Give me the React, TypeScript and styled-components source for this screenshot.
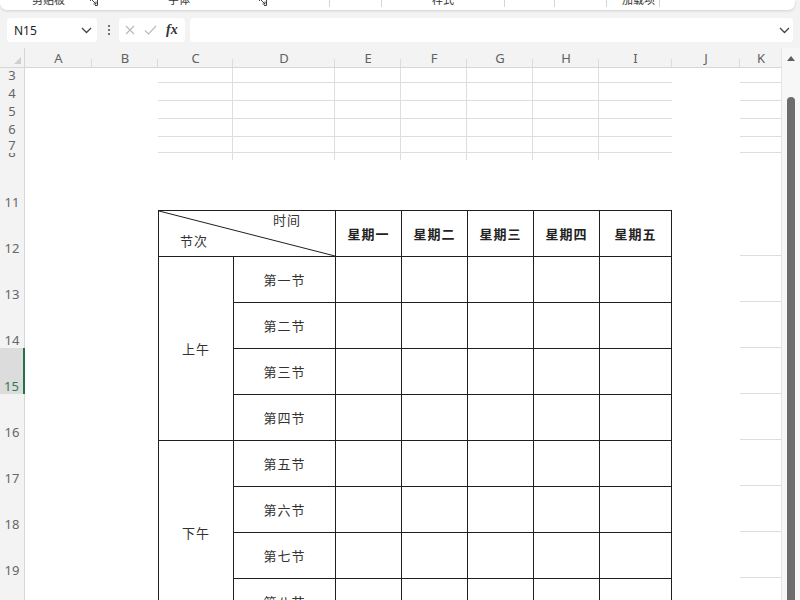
import React from 'react';
import styled, { createGlobalStyle } from 'styled-components';

const GlobalStyle = createGlobalStyle`
  html, body { margin: 0; padding: 0; }
  body {
    font-family: "Noto Sans", "Noto Sans CJK SC", sans-serif;
    background: #f3f3f3;
  }
`;

const COLS = ['A', 'B', 'C', 'D', 'E', 'F', 'G', 'H', 'I', 'J', 'K'];

type RowKind = 'grid' | 'stub' | 'blank' | 'table';

const ROWS: { n: string; kind: RowKind }[] = [
  { n: '3', kind: 'grid' },
  { n: '4', kind: 'grid' },
  { n: '5', kind: 'grid' },
  { n: '6', kind: 'grid' },
  { n: '7', kind: 'grid' },
  { n: '8', kind: 'stub' },
  { n: '11', kind: 'blank' },
  ...['12', '13', '14', '15', '16', '17', '18', '19', '20'].map((n) => ({ n, kind: 'table' as RowKind })),
];

const WEEKDAYS = ['星期一', '星期二', '星期三', '星期四', '星期五'];

const PERIODS = [
  { label: '上午', lessons: ['第一节', '第二节', '第三节', '第四节'] },
  { label: '下午', lessons: ['第五节', '第六节', '第七节', '第八节'] },
];

// which light gridlines a plain cell shows
function cellLines(kind: RowKind, col: number) {
  if (kind === 'grid') {
    if (col >= 2 && col <= 7) return { r: true, b: true };
    if (col === 8 || col === 10) return { r: false, b: true };
  }
  if (kind === 'stub' && col >= 2 && col <= 7) return { r: true, b: false };
  if (kind === 'table' && col === 10) return { r: false, b: true };
  return { r: false, b: false };
}

export default function App() {
  return (
    <Window>
      <GlobalStyle />
      {/*------------ Ribbon (clipped) -----------*/}
      <Ribbon>
        <RibbonGroup $w={104} $pl={32} $pr={6}>
          <RibbonLabel>剪贴板</RibbonLabel>
          <Launcher />
        </RibbonGroup>
        <RibbonGroup $w={171} $pl={64} $pr={8}>
          <RibbonLabel>字体</RibbonLabel>
          <Launcher />
        </RibbonGroup>
        <RibbonGroup $w={55} $divider />
        <RibbonGroup $w={52} $divider />
        <RibbonGroup $w={123} $pl={50} $divider>
          <RibbonLabel>样式</RibbonLabel>
        </RibbonGroup>
        <RibbonGroup $w={50} $divider />
        <RibbonGroup $w={52} $divider />
        <RibbonGroup $w={53} $pl={15} $divider>
          <RibbonLabel>加载项</RibbonLabel>
        </RibbonGroup>
      </Ribbon>

      {/*------------ Formula bar -----------*/}
      <FormulaRow>
        <NameBox>
          <span>N15</span>
          <Chevron />
        </NameBox>
        <Dots>
          <svg width="4" height="12" viewBox="0 0 4 12">
            <circle cx="2" cy="2" r="1.1" fill="#555" />
            <circle cx="2" cy="6" r="1.1" fill="#555" />
            <circle cx="2" cy="10" r="1.1" fill="#555" />
          </svg>
        </Dots>
        <EditBox>
          <svg width="10" height="10" viewBox="0 0 10 10">
            <path d="M1 1 L9 9 M9 1 L1 9" stroke="#b8b8b8" strokeWidth="1.1" fill="none" />
          </svg>
          <svg width="13" height="10" viewBox="0 0 13 10">
            <path d="M1 5.5 L4.5 9 L12 1" stroke="#b8b8b8" strokeWidth="1.1" fill="none" />
          </svg>
          <Fx>fx</Fx>
        </EditBox>
        <FormulaInput>
          <Chevron />
        </FormulaInput>
      </FormulaRow>

      {/*------------ Sheet -----------*/}
      <SheetArea>
        <Grid>
          <Corner>
            <CornerMark />
          </Corner>
          {COLS.map((c) => (
            <ColHead key={c}>{c}</ColHead>
          ))}
          {ROWS.map((row) => (
            <React.Fragment key={row.n}>
              <RowHead $selected={row.n === '15'}>{row.n}</RowHead>
              {COLS.map((c, i) => {
                if (row.kind === 'table' && i >= 2 && i <= 8) return null;
                const l = cellLines(row.kind, i);
                return <Cell key={c} $r={l.r} $b={l.b} />;
              })}
            </React.Fragment>
          ))}

          {/*------------ Timetable -----------*/}
          <Timetable>
            <DiagCell>
              <svg width="100%" height="100%" preserveAspectRatio="none">
                <line x1="0" y1="0" x2="100%" y2="100%" stroke="#1f1f1f" strokeWidth="1" />
              </svg>
              <DiagTop>时间</DiagTop>
              <DiagBottom>节次</DiagBottom>
            </DiagCell>
            {WEEKDAYS.map((d) => (
              <TCell key={d} $head>
                {d}
              </TCell>
            ))}
            {PERIODS.map((p) =>
              p.lessons.map((lesson, li) => (
                <React.Fragment key={lesson}>
                  {li === 0 && <TCell $span={4}>{p.label}</TCell>}
                  <TCell>{lesson}</TCell>
                  {WEEKDAYS.map((d) => (
                    <TCell key={d} />
                  ))}
                </React.Fragment>
              ))
            )}
          </Timetable>
        </Grid>
        <VScroll>
          <ScrollArrow />
          <Thumb />
        </VScroll>
      </SheetArea>
    </Window>
  );
}

function Chevron() {
  return (
    <svg width="11" height="7" viewBox="0 0 11 7">
      <path d="M1 1 L5.5 5.5 L10 1" stroke="#444" strokeWidth="1.3" fill="none" />
    </svg>
  );
}

function Launcher() {
  return (
    <svg width="8" height="8" viewBox="0 0 8 8">
      <path d="M0.5 3 V0.5 H7.5 V7.5 H5" stroke="#444" strokeWidth="1" fill="none" />
      <path d="M2 2 L6 6 M6 3.5 V6 H3.5" stroke="#444" strokeWidth="1" fill="none" />
    </svg>
  );
}

const Window = styled.div`
  width: 800px;
  height: 600px;
  overflow: hidden;
  display: flex;
  flex-direction: column;
  background: #f3f3f3;
`;

const Ribbon = styled.div`
  flex: 0 0 10px;
  margin-right: 5px;
  background: #fff;
  border-radius: 0 0 7px 7px;
  box-shadow: 0 1px 3px rgba(0, 0, 0, 0.14);
  display: flex;
  overflow: hidden;
`;

const RibbonGroup = styled.div<{ $w: number; $pl?: number; $pr?: number; $divider?: boolean }>`
  flex: 0 0 ${(p) => p.$w}px;
  box-sizing: border-box;
  display: flex;
  align-items: flex-end;
  justify-content: space-between;
  padding: 0 ${(p) => p.$pr || 0}px 4px ${(p) => p.$pl || 0}px;
  background: ${(p) =>
    p.$divider ? 'linear-gradient(#d4d4d4, #d4d4d4) right top / 1px 7px no-repeat' : 'none'};
`;

const RibbonLabel = styled.div`
  font-family: "Noto Sans CJK SC", sans-serif;
  font-size: 11px;
  line-height: 13px;
  color: #333;
  white-space: nowrap;
`;

const FormulaRow = styled.div`
  flex: 0 0 24px;
  display: flex;
  align-items: center;
  margin: 8px 7px 6px 7px;
`;

const NameBox = styled.div`
  width: 90px;
  height: 24px;
  box-sizing: border-box;
  background: #fff;
  border-radius: 4px;
  display: flex;
  align-items: center;
  justify-content: space-between;
  padding: 0 5px 0 7px;
  font-size: 12px;
  color: #222;
`;

const Dots = styled.div`
  display: flex;
  margin: 0 8px 0 10px;
`;

const EditBox = styled.div`
  width: 66px;
  height: 24px;
  box-sizing: border-box;
  background: #fff;
  border-radius: 4px;
  display: flex;
  align-items: center;
  gap: 9px;
  padding-left: 6px;
  margin-right: 5px;
`;

const Fx = styled.span`
  font-family: "Liberation Serif", serif;
  font-style: italic;
  font-weight: 700;
  font-size: 14px;
  color: #333;
`;

const FormulaInput = styled.div`
  flex: 1;
  height: 24px;
  background: #fff;
  border-radius: 4px;
  display: flex;
  align-items: center;
  justify-content: flex-end;
  padding-right: 3px;
`;

const SheetArea = styled.div`
  flex: 1;
  display: flex;
  overflow: hidden;
  background: #fff;
`;

const Grid = styled.div`
  width: 782px;
  display: grid;
  grid-template-columns: 25px 67px 66px 75px 102px 66px 66px 66px 66px 73px 68px 42px;
  grid-template-rows: 20px 15px 18px 18px 18px 16px 7px 50px repeat(9, 46px);
  overflow: hidden;
`;

const Corner = styled.div`
  background: #f3f3f3;
  border-right: 1px solid #d6d6d6;
  border-bottom: 1px solid #d6d6d6;
  display: flex;
  align-items: flex-end;
  justify-content: flex-end;
  padding: 0 3px 3px 0;
`;

const CornerMark = styled.div`
  width: 0;
  height: 0;
  border-left: 7px solid transparent;
  border-bottom: 7px solid #cfcfcf;
`;

const ColHead = styled.div`
  background: #f3f3f3 linear-gradient(#dcdcdc, #dcdcdc) right bottom / 1px 8px no-repeat;
  border-bottom: 1px solid #d6d6d6;
  display: flex;
  align-items: center;
  justify-content: center;
  font-size: 13px;
  color: #616161;
`;

const RowHead = styled.div<{ $selected?: boolean }>`
  background: ${(p) => (p.$selected ? '#dcdcdc' : '#f3f3f3')};
  border-right: ${(p) => (p.$selected ? '2px solid #217346' : '1px solid #d6d6d6')};
  display: flex;
  align-items: flex-end;
  justify-content: center;
  overflow: hidden;
  font-size: 13px;
  line-height: 16px;
  color: ${(p) => (p.$selected ? '#2f7a52' : '#666')};
`;

const Cell = styled.div<{ $r?: boolean; $b?: boolean }>`
  box-sizing: border-box;
  border-right: ${(p) => (p.$r ? '1px solid #dedede' : 'none')};
  border-bottom: ${(p) => (p.$b ? '1px solid #dedede' : 'none')};
`;

const Timetable = styled.div`
  grid-column: 4 / 11;
  grid-row: 9 / 18;
  align-self: start;
  display: grid;
  grid-template-columns: 74px 101px 65px 65px 65px 65px 71px;
  grid-template-rows: repeat(9, 45px);
  gap: 1px;
  background: #1f1f1f;
  border: 1px solid #1f1f1f;
`;

const TCell = styled.div<{ $head?: boolean; $span?: number }>`
  background: #fff;
  grid-row: ${(p) => (p.$span ? `span ${p.$span}` : 'auto')};
  display: flex;
  align-items: center;
  justify-content: center;
  font-family: "Noto Sans CJK SC", sans-serif;
  font-size: 13px;
  letter-spacing: 1px;
  font-weight: ${(p) => (p.$head ? 700 : 400)};
  color: ${(p) => (p.$head ? '#222' : '#333')};
`;

const DiagCell = styled.div`
  grid-column: span 2;
  background: #fff;
  position: relative;
  display: flex;
  flex-direction: column;
  justify-content: space-between;
  padding: 0 0 6px;
  font-family: "Noto Sans CJK SC", sans-serif;
  font-size: 13px;
  line-height: 18px;
  letter-spacing: 1px;
  color: #333;

  svg {
    position: absolute;
    inset: 0;
  }
`;

const DiagTop = styled.div`
  align-self: flex-end;
  margin-right: 34px;
`;

const DiagBottom = styled.div`
  align-self: flex-start;
  margin-left: 21px;
`;

const VScroll = styled.div`
  width: 18px;
  background: #f7f7f7;
  border-left: 1px solid #e6e6e6;
  display: flex;
  flex-direction: column;
  align-items: center;
`;

const ScrollArrow = styled.div`
  width: 0;
  height: 0;
  margin-top: 8px;
  border-left: 4px solid transparent;
  border-right: 4px solid transparent;
  border-bottom: 5px solid #5f5f5f;
`;

const Thumb = styled.div`
  width: 8px;
  flex: 1;
  margin-top: 36px;
  background: #6d6d6d;
  border-radius: 4px 4px 0 0;
`;
